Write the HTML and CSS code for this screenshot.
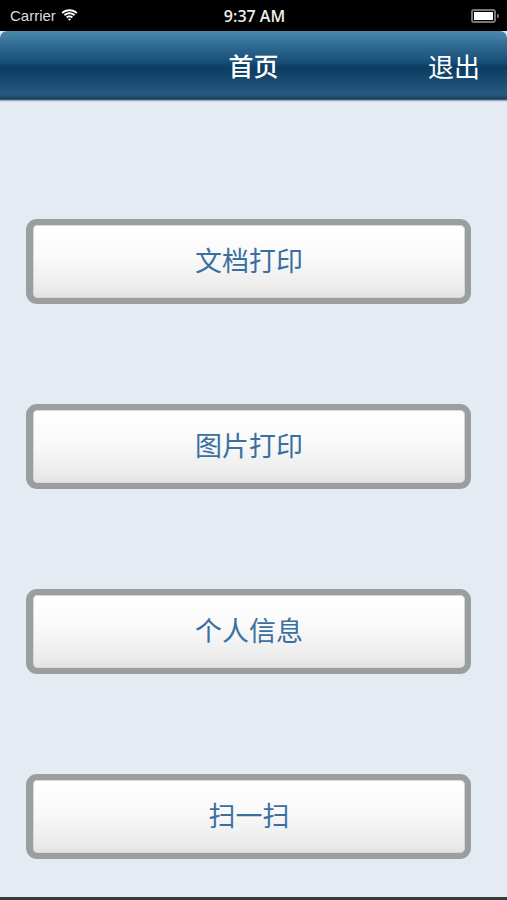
FILE: index.html
```html
<!doctype html>
<html lang="zh">
<head>
<meta charset="utf-8">
<meta name="viewport" content="width=device-width,user-scalable=no">
<title>首页</title>
<link rel="stylesheet" href="styles.css">
</head>
<body>

	<div class="statusBar">
		<div class="carrier">
			Carrier
			<svg class="wifi" width="17" height="12" viewBox="0 0 17 12">
				<path d="M8.5 2.2c2.6 0 4.9 1 6.7 2.6l1.3-1.4C14.4 1.4 11.6.2 8.5.2S2.6 1.4.5 3.4l1.3 1.4C3.6 3.2 5.9 2.2 8.5 2.2z" fill="#fff"/>
				<path d="M8.5 5.3c1.7 0 3.2.6 4.4 1.7l1.3-1.4C12.7 4.2 10.7 3.3 8.5 3.3S4.3 4.2 2.8 5.6l1.3 1.4c1.2-1.1 2.7-1.7 4.4-1.7z" fill="#fff"/>
				<path d="M8.5 8.3c.9 0 1.6.3 2.2.9l1.3-1.4C11.1 6.9 9.9 6.4 8.5 6.4S5.9 6.9 5 7.8l1.3 1.4c.6-.6 1.3-.9 2.2-.9zM8.5 11.8l1.6-1.7c-.4-.4-1-.7-1.6-.7s-1.2.3-1.6.7z" fill="#fff"/>
			</svg>
		</div>
		<div class="clock">9:37 AM</div>
		<div class="battery"><span class="batteryLevel"></span></div>
	</div>

	<div class="navBar">
		<span class="navTitle">首页</span>
		<span class="navRight">退出</span>
	</div>

	<div class="menu">
		<button class="menuButton">文档打印</button>
		<button class="menuButton">图片打印</button>
		<button class="menuButton">个人信息</button>
		<button class="menuButton">扫一扫</button>
	</div>

	<div class="homeBar"></div>

</body>
</html>
```

FILE: styles.css
```css
body { background: #e5ebf2; font-family: "Liberation Sans", "Noto Sans CJK SC", sans-serif; margin: 0; height: 900px; display: flex; flex-direction: column; overflow: hidden; }

.statusBar { background: #000; color: #fff; height: 31px; display: flex; align-items: center; justify-content: space-between; padding: 0 8px 0 10px; box-sizing: border-box; flex-shrink: 0; }
.carrier { color: #ddd; font-size: 15px; display: flex; align-items: center; gap: 5px; width: 100px; }
.wifi { margin-top: -2px; }
.clock { font-size: 16px; font-family: "Open Sans", sans-serif; font-weight: 600; color: #eee; }
.battery { width: 100px; display: flex; justify-content: flex-end; }
.battery::after { content: ""; width: 2px; height: 4px; background: #666; align-self: center; margin-left: 1px; border-radius: 0 1px 1px 0; }
.batteryLevel { width: 19px; height: 8px; border: 2px solid #777; border-radius: 3px; background: #fff; background-clip: content-box; padding: 1px; }

.navBar { height: 71px; flex-shrink: 0; position: relative; display: flex; align-items: center; justify-content: center; border-radius: 7px 7px 0 0; color: #fff; font-family: "Noto Sans CJK SC", sans-serif; background: linear-gradient(#4c89af 0%, #2e6890 22%, #1a5179 42%, #0c3c62 52%, #184b72 70%, #265a80 90%, #1b3c57 96%, #c6d2de 98.6%, #dfe6ee 100%); }
.navTitle { font-size: 25px; font-weight: 500; margin-top: -4px; }
.navRight { position: absolute; right: 27px; top: 16px; font-size: 26px; }

.menu { display: flex; flex-direction: column; gap: 100px; padding: 117px 36px 0 26px; }
.menuButton { height: 85px; box-sizing: border-box; border: 7px solid #9b9ea0; border-width: 6px 6px 6px 7px; border-radius: 11px; background: linear-gradient(#ffffff 0%, #f9f9f9 45%, #ececec 85%, #e2e2e2 100%); color: #3b6fa2; font-size: 27px; font-family: "Noto Sans CJK SC", sans-serif; padding: 0 0 4px 0; box-shadow: inset 0 0 0 1px #d8d8d8; cursor: pointer; }

.homeBar { margin-top: auto; height: 3px; background: #3a3a3a; }
```
